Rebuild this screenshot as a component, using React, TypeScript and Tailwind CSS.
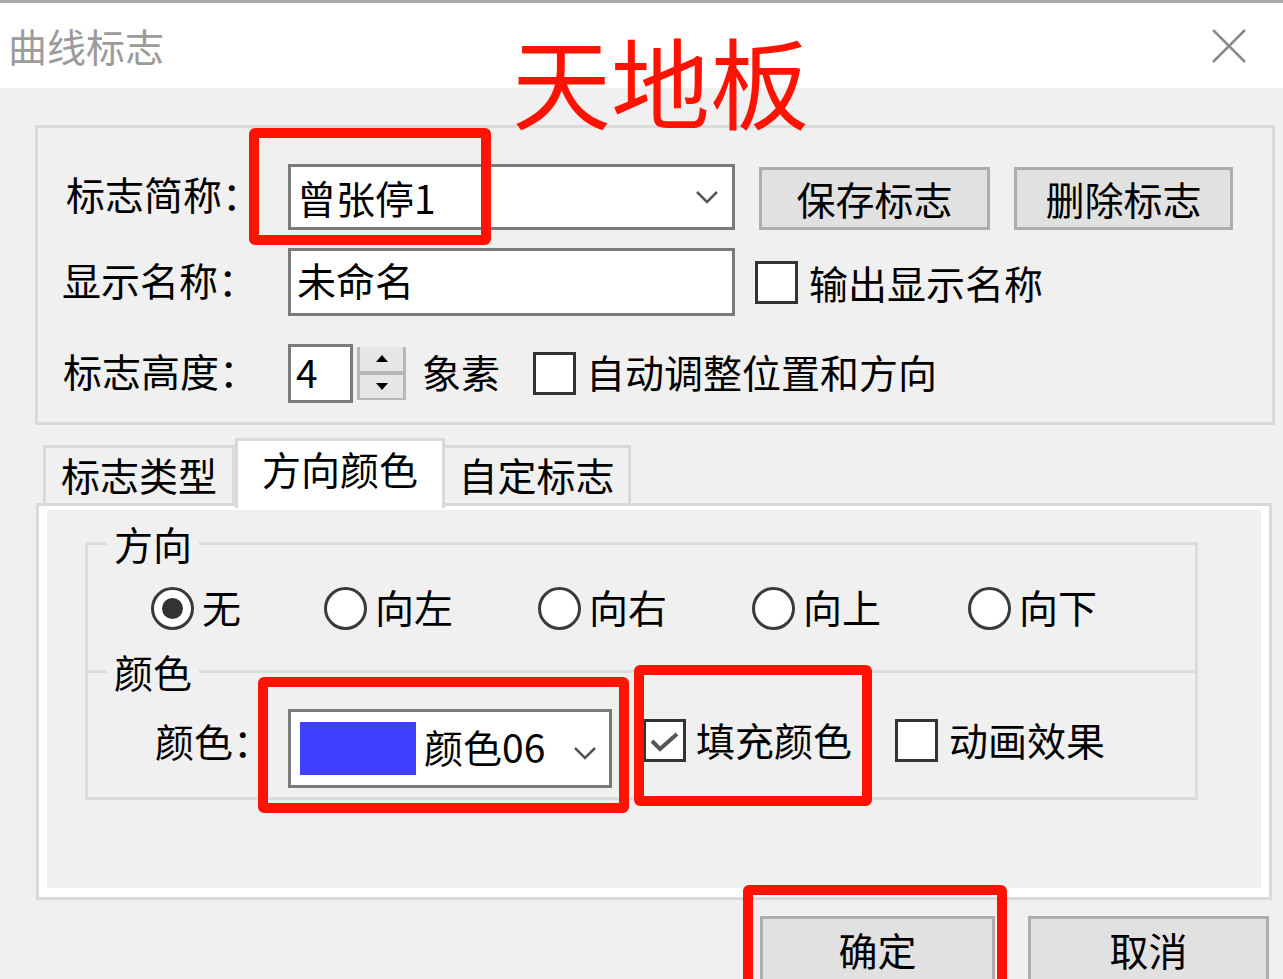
import React from "react";

const Chevron = () => (
  <svg width="24" height="14" viewBox="0 0 24 14" fill="none">
    <path d="M2 2 L12 12 L22 2" stroke="#555" strokeWidth="2.5" />
  </svg>
);

function CheckBox({ checked = false }: { checked?: boolean }) {
  return (
    <div className="flex h-[43px] w-[43px] shrink-0 items-center justify-center border-[3px] border-[#333] bg-white">
      {checked && (
        <svg width="34" height="34" viewBox="0 0 34 34" fill="none">
          <path d="M4 17 L12 25 L29 10" stroke="#555" strokeWidth="4" />
        </svg>
      )}
    </div>
  );
}

function Radio({ label, checked = false, width }: { label: string; checked?: boolean; width: string }) {
  return (
    <div className={`flex items-center ${width}`}>
      <div className="flex h-[43px] w-[43px] shrink-0 items-center justify-center rounded-full border-[3px] border-[#3a3a3a] bg-white">
        {checked && <div className="h-[21px] w-[21px] rounded-full bg-[#333]" />}
      </div>
      <span className="ml-[8px] mb-[4px] leading-none">{label}</span>
    </div>
  );
}

function Button({ label, width }: { label: string; width: string }) {
  return (
    <div className={`flex h-[63px] items-center justify-center border-[3px] border-[#adadad] bg-[#e1e1e1] ${width}`}>
      <span className="leading-none">{label}</span>
    </div>
  );
}

export default function App() {
  return (
    <div className="relative h-[979px] w-[1283px] overflow-hidden bg-[#f0f0f0] font-['Noto_Sans_CJK_SC','Noto_Sans',sans-serif] text-[39px] text-black">
      {/* title bar */}
      <div className="h-[3px] bg-[#a9a9a9]" />
      <div className="flex h-[85px] items-center justify-between bg-white pl-[8px] pr-[37px]">
        <span className="leading-none text-[#9b9b9b]">曲线标志</span>
        <svg width="34" height="34" viewBox="0 0 34 34" fill="none">
          <path d="M1 1 L33 33 M33 1 L1 33" stroke="#8a8a8a" strokeWidth="2.5" />
        </svg>
      </div>

      <div className="pl-[35px] pt-[37px]">
        {/* top group */}
        <div className="h-[300px] w-[1240px] border-[3px] border-[#dadada]">
          <div className="mt-[36px] flex h-[66px] items-end">
            <div className="flex h-full w-[250px] items-center pb-[8px] pl-[28px] leading-none">标志简称：</div>
            <div className="flex h-[66px] w-[447px] items-center justify-between border-[3px] border-[#7a7a7a] bg-white pl-[6px] pr-[13px]">
              <span className="leading-none">曾张停1</span>
              <Chevron />
            </div>
            <Button label="保存标志" width="ml-[24px] w-[231px]" />
            <Button label="删除标志" width="ml-[24px] w-[219px]" />
          </div>

          <div className="mt-[18px] flex h-[68px] items-center">
            <div className="w-[250px] pb-[6px] pl-[24px] leading-none">显示名称：</div>
            <div className="flex h-[68px] w-[447px] items-center border-[3px] border-[#7a7a7a] bg-white pb-[6px] pl-[6px]">
              <span className="leading-none">未命名</span>
            </div>
            <div className="ml-[20px]">
              <CheckBox />
            </div>
            <span className="ml-[11px] leading-none">输出显示名称</span>
          </div>

          <div className="mt-[28px] flex h-[59px] items-center">
            <div className="w-[250px] pb-[6px] pl-[25px] leading-none">标志高度：</div>
            <div className="flex h-[59px] w-[65px] items-center border-[3px] border-[#7a7a7a] bg-white pb-[4px] pl-[5px]">
              <span className="leading-none">4</span>
            </div>
            <div className="ml-[4px] flex h-[53px] w-[49px] flex-col border-x-[3px] border-b-[2px] border-[#b8b8b8]">
              <div className="flex flex-1 items-center justify-center bg-[#e6e6e6]">
                <svg width="12" height="7" viewBox="0 0 12 7">
                  <path d="M0 7 L6 0 L12 7 Z" fill="#000" />
                </svg>
              </div>
              <div className="h-[4px] bg-[#b8b8b8]" />
              <div className="flex flex-1 items-center justify-center bg-[#e6e6e6]">
                <svg width="12" height="7" viewBox="0 0 12 7">
                  <path d="M0 0 L6 7 L12 0 Z" fill="#000" />
                </svg>
              </div>
            </div>
            <span className="ml-[16px] pb-[4px] leading-none">象素</span>
            <div className="ml-[33px]">
              <CheckBox />
            </div>
            <span className="ml-[10px] pb-[4px] leading-none">自动调整位置和方向</span>
          </div>
        </div>

        {/* tabs */}
        <div className="ml-[8px] mt-[13px] flex h-[65px] items-end">
          <div className="flex h-[58px] w-[192px] items-center justify-center border-[3px] border-b-0 border-[#d9d9d9] bg-[#f0f0f0] pb-[2px]">
            <span className="leading-none">标志类型</span>
          </div>
          <div className="relative z-10 mb-[-5px] flex h-[70px] w-[210px] justify-center border-[3px] border-b-0 border-[#d9d9d9] bg-white pt-[8px]">
            <span className="leading-none">方向颜色</span>
          </div>
          <div className="flex h-[58px] w-[186px] items-center justify-center border-[3px] border-b-0 border-l-0 border-[#d9d9d9] bg-[#f0f0f0] pb-[2px]">
            <span className="leading-none">自定标志</span>
          </div>
        </div>

        {/* tab panel */}
        <div className="ml-[1px] h-[397px] w-[1236px] border-[3px] border-[#d9d9d9] bg-white pb-[9px] pl-[8px] pr-[8px] pt-[4px]">
          <div className="h-full bg-[#f0f0f0] pl-[38px] pt-[13px]">
            <fieldset className="h-[148px] w-[1113px] border-[3px] border-b-0 border-[#dcdcdc]">
              <legend className="ml-[19px] px-[7px] leading-[40px]">方向</legend>
              <div className="mt-[24px] flex pl-[63px]">
                <Radio label="无" checked width="w-[173px]" />
                <Radio label="向左" width="w-[214px]" />
                <Radio label="向右" width="w-[214px]" />
                <Radio label="向上" width="w-[216px]" />
                <Radio label="向下" width="w-[130px]" />
              </div>
            </fieldset>
            <fieldset className="mt-[-20px] h-[149px] w-[1113px] border-[3px] border-[#dcdcdc]">
              <legend className="ml-[19px] px-[7px] leading-[40px]">颜色</legend>
              <div className="mt-[18px] flex h-[79px] items-center">
                <div className="mb-[16px] w-[200px] pl-[67px] leading-none">颜色：</div>
                <div className="flex h-[79px] w-[324px] items-center border-[3px] border-[#7a7a7a] bg-white pl-[9px]">
                  <div className="h-[53px] w-[116px] bg-[#3f3fff]" />
                  <span className="ml-[8px] mb-[4px] leading-none">颜色06</span>
                  <div className="ml-[28px] mt-[8px]">
                    <Chevron />
                  </div>
                </div>
                <div className="mb-[16px] ml-[31px] flex items-center">
                  <CheckBox checked />
                  <span className="ml-[10px] mb-[2px] leading-none">填充颜色</span>
                </div>
                <div className="mb-[16px] ml-[43px] flex items-center">
                  <CheckBox />
                  <span className="ml-[11px] mb-[2px] leading-none">动画效果</span>
                </div>
              </div>
            </fieldset>
          </div>
        </div>

        {/* bottom buttons */}
        <div className="mt-[16px] flex justify-end gap-[33px] pr-[14px]">
          <div className="flex h-[66px] w-[235px] items-center justify-center border-[3px] border-[#adadad] bg-[#e1e1e1]">
            <span className="leading-none">确定</span>
          </div>
          <div className="flex h-[66px] w-[241px] items-center justify-center border-[3px] border-[#adadad] bg-[#e1e1e1]">
            <span className="leading-none">取消</span>
          </div>
        </div>
      </div>

      {/* red annotations */}
      <div className="absolute left-[512px] top-[30px] text-[99px] leading-none text-[#ff1200]">天地板</div>
      <div className="absolute left-[249px] top-[128px] h-[117px] w-[242px] rounded-[6px] border-[10px] border-[#ff1200]" />
      <div className="absolute left-[258px] top-[677px] h-[136px] w-[371px] rounded-[6px] border-[10px] border-[#ff1200]" />
      <div className="absolute left-[634px] top-[665px] h-[141px] w-[238px] rounded-[6px] border-[10px] border-[#ff1200]" />
      <div className="absolute left-[743px] top-[885px] h-[110px] w-[264px] rounded-[6px] border-[10px] border-[#ff1200]" />
    </div>
  );
}
